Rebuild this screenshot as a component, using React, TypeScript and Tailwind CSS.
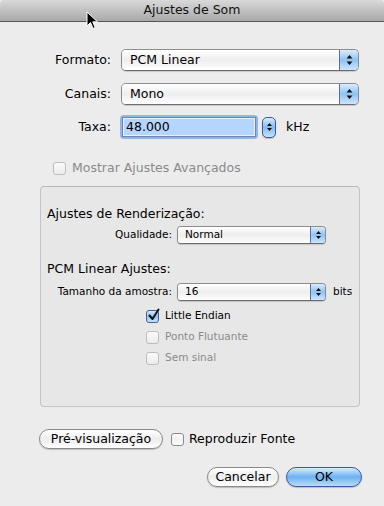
import React from 'react';

const font = "font-['DejaVu_Sans',sans-serif]";

// Aqua-style up/down arrows used in popups and steppers
const Arrows: React.FC<{ small?: boolean }> = ({ small }) => (
  <svg width="7" height={small ? 10 : 12} viewBox={small ? '0 0 7 10' : '0 0 7 12'}>
    {small ? (
      <>
        <path d="M3.5 1 L6 4 L1 4 Z" fill="#111" />
        <path d="M3.5 9 L6 6 L1 6 Z" fill="#111" />
      </>
    ) : (
      <>
        <path d="M3.5 1 L6.5 4.5 L0.5 4.5 Z" fill="#111" />
        <path d="M3.5 11 L6.5 7.5 L0.5 7.5 Z" fill="#111" />
      </>
    )}
  </svg>
);

interface PopupProps {
  value: string;
  width: string;
  small?: boolean;
}

const Popup: React.FC<PopupProps> = ({ value, width, small }) => (
  <div
    className={`flex ${width} ${small ? 'h-[18px] rounded-[4px]' : 'h-[22px] rounded-[5px]'} border border-[#8d8d8d] border-b-[#6c6c6c] overflow-hidden shadow-[0_1px_1px_rgba(0,0,0,0.15)]`}
  >
    <div
      className={`flex-1 flex items-center bg-gradient-to-b from-[#ffffff] via-[#eeeeee] to-[#ffffff] ${small ? 'pl-[7px] text-[10.5px]' : 'pl-[8px] text-[12.5px]'} text-black`}
    >
      {value}
    </div>
    <div
      className={`${small ? 'w-[15px]' : 'w-[19px]'} flex items-center justify-center border-l border-[#5a6fae] bg-gradient-to-b from-[#d9ecfd] via-[#8fc3f3] to-[#cde6fc]`}
    >
      <Arrows small={small} />
    </div>
  </div>
);

interface CheckProps {
  checked?: boolean;
  disabled?: boolean;
}

const Check: React.FC<CheckProps> = ({ checked, disabled }) =>
  checked ? (
    <div className="w-[13px] h-[13px] rounded-[3px] border border-[#4a5e9a] bg-gradient-to-b from-[#d4e9fc] via-[#8ec2f2] to-[#c6e2fb] flex items-center justify-center relative">
      <svg width="13" height="14" viewBox="0 0 13 14" className="absolute -top-[3px] left-[0px]">
        <path d="M2.5 7.5 L5.5 11 L11.5 1.5" stroke="#111" strokeWidth="2" fill="none" strokeLinecap="round" strokeLinejoin="round" />
      </svg>
    </div>
  ) : (
    <div
      className={`w-[13px] h-[13px] rounded-[3px] border ${disabled ? 'border-[#bdbdbd] bg-gradient-to-b from-[#fafafa] to-[#ececec]' : 'border-[#8a8a8a] bg-gradient-to-b from-[#ffffff] via-[#f0f0f0] to-[#ffffff]'}`}
    />
  );

const PillButton: React.FC<{ label: string; width: string; primary?: boolean }> = ({ label, width, primary }) => (
  <div
    className={`${width} h-[20px] rounded-full flex items-center justify-center text-[12.5px] text-black shadow-[0_1px_1px_rgba(0,0,0,0.2)] ${
      primary
        ? 'border border-[#3d57a3] bg-gradient-to-b from-[#d6ebfd] via-[#6cb1f0] to-[#b9dcfa]'
        : 'border border-[#8a8a8a] bg-gradient-to-b from-[#ffffff] via-[#ededed] to-[#ffffff]'
    }`}
  >
    {label}
  </div>
);

export default function App() {
  return (
    <div className={`relative w-[384px] h-[506px] bg-[#ececec] overflow-hidden ${font} text-black`}>
      {/* Title bar */}
      <div className="h-[22px] rounded-t-[4px] border-b border-[#555555] bg-gradient-to-b from-[#d9d9d9] to-[#a9a9a9] flex items-center justify-center text-[12.5px] text-[#111]">
        Ajustes de Som
      </div>

      {/* Formato */}
      <div className="flex items-center mt-[27px]">
        <div className="w-[111px] text-right text-[12.5px]">Formato:</div>
        <div className="ml-[10px]">
          <Popup value="PCM Linear" width="w-[238px]" />
        </div>
      </div>

      {/* Canais */}
      <div className="flex items-center mt-[12px]">
        <div className="w-[111px] text-right text-[12.5px]">Canais:</div>
        <div className="ml-[10px]">
          <Popup value="Mono" width="w-[238px]" />
        </div>
      </div>

      {/* Taxa */}
      <div className="flex items-center mt-[10px]">
        <div className="w-[111px] text-right text-[12.5px]">Taxa:</div>
        <div className="ml-[9px] w-[138px] h-[24px] rounded-[4px] bg-[#8fb5ea] p-[2px]">
          <div className="w-full h-full border border-[#6f87b0] bg-[#b5d5fd] outline outline-1 outline-[#e6f0ff] -outline-offset-2 flex items-center pl-[3px] text-[12.5px]">
            48.000
          </div>
        </div>
        <div className="ml-[4px] w-[14px] h-[21px] rounded-[5px] border border-[#3d57a3] bg-gradient-to-b from-[#d6ebfd] via-[#80bcf2] to-[#c6e3fb] flex items-center justify-center shadow-[0_1px_1px_rgba(0,0,0,0.2)]">
          <Arrows small />
        </div>
        <div className="ml-[10px] text-[12.5px]">kHz</div>
      </div>

      {/* Advanced */}
      <div className="flex items-center h-[14px] mt-[22px] pl-[53px]">
        <Check disabled />
        <span className="ml-[6px] text-[12.5px] text-[#8a8a8a]">Mostrar Ajustes Avançados</span>
      </div>

      {/* Group box */}
      <div className="mt-[11px] ml-[40px] w-[320px] h-[221px] rounded-[4px] border border-[#c4c4c4] border-t-[#b8b8b8] bg-[#e7e7e7]">
        <div className="pt-[19px] pl-[6px] text-[12.5px] leading-[15px]">Ajustes de Renderização:</div>

        <div className="flex items-center mt-[5px]">
          <div className="w-[131px] text-right text-[10.5px]">Qualidade:</div>
          <div className="ml-[5px]">
            <Popup value="Normal" width="w-[149px]" small />
          </div>
        </div>

        <div className="mt-[17px] pl-[6px] text-[12.5px] leading-[15px]">PCM Linear Ajustes:</div>

        <div className="flex items-center mt-[7px]">
          <div className="w-[131px] text-right text-[10.5px]">Tamanho da amostra:</div>
          <div className="ml-[5px]">
            <Popup value="16" width="w-[149px]" small />
          </div>
          <div className="ml-[7px] text-[10.5px]">bits</div>
        </div>

        <div className="flex flex-col gap-[7px] mt-[8px] pl-[105px]">
          <div className="flex items-center h-[14px]">
            <Check checked />
            <span className="ml-[6px] text-[10.5px]">Little Endian</span>
          </div>
          <div className="flex items-center h-[14px]">
            <Check disabled />
            <span className="ml-[6px] text-[10.5px] text-[#8a8a8a]">Ponto Flutuante</span>
          </div>
          <div className="flex items-center h-[14px]">
            <Check disabled />
            <span className="ml-[6px] text-[10.5px] text-[#8a8a8a]">Sem sinal</span>
          </div>
        </div>
      </div>

      {/* Preview */}
      <div className="flex items-center h-[20px] mt-[22px] pl-[39px]">
        <PillButton label="Pré-visualização" width="w-[124px]" />
        <div className="ml-[8px]">
          <Check />
        </div>
        <span className="ml-[5px] text-[12.5px]">Reproduzir Fonte</span>
      </div>

      {/* Dialog buttons */}
      <div className="flex justify-end gap-[7px] mt-[18px] pr-[22px]">
        <PillButton label="Cancelar" width="w-[72px]" />
        <PillButton label="OK" width="w-[76px]" primary />
      </div>

      {/* Mouse cursor */}
      <svg className="absolute left-[86px] top-[11px]" width="14" height="20" viewBox="0 0 14 20">
        <path d="M1 1 L1 15 L4.5 11.5 L7 17.5 L9.2 16.6 L6.8 10.8 L11.5 10.8 Z" fill="#000" stroke="#fff" strokeWidth="1" strokeLinejoin="round" />
      </svg>
    </div>
  );
}
